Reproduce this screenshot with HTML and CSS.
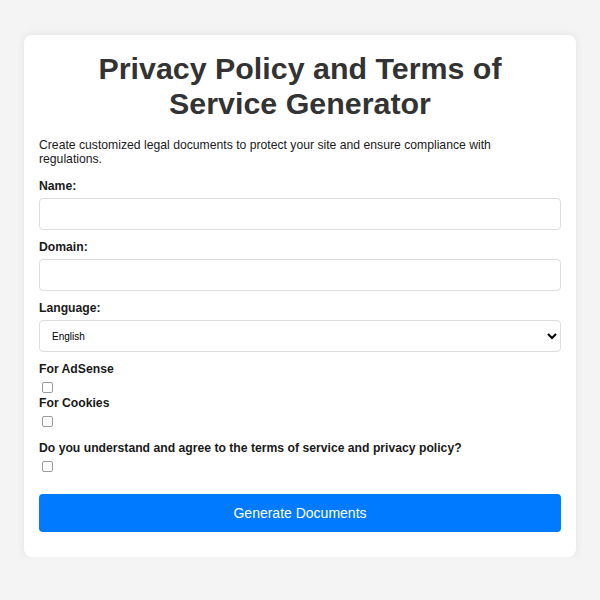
FILE: index.html
```html
<!DOCTYPE html>
<html lang="en">
<head>
<meta charset="utf-8">
<title>Privacy Policy and Terms of Service Generator</title>
<link rel="stylesheet" href="styles.css">
</head>
<body>
<div class="card">
  <h1 class="title">Privacy Policy and Terms of Service Generator</h1>
  <p class="intro">Create customized legal documents to protect your site and ensure compliance with regulations.</p>
  <form class="form">
    <label class="label" for="name">Name:</label>
    <input class="field" type="text" id="name">
    <label class="label" for="domain">Domain:</label>
    <input class="field" type="text" id="domain">
    <label class="label" for="lang">Language:</label>
    <select class="field select" id="lang">
      <option>English</option>
    </select>
    <label class="label" for="adsense">For AdSense</label>
    <input class="check" type="checkbox" id="adsense">
    <label class="label" for="cookies">For Cookies</label>
    <input class="check check-last" type="checkbox" id="cookies">
    <label class="label" for="agree">Do you understand and agree to the terms of service and privacy policy?</label>
    <input class="check check-agree" type="checkbox" id="agree">
    <button class="btn" type="button">Generate Documents</button>
  </form>
</div>
</body>
</html>
```
FILE: styles.css
```css
html, body {
  margin: 0;
  padding: 0;
}
body {
  background: #f4f4f4;
  font-family: "Liberation Sans", Arial, sans-serif;
  color: #1a1a1a;
  padding: 35px 24px 0;
}
.card {
  background: #fff;
  border-radius: 8px;
  box-shadow: 0 0 8px rgba(0, 0, 0, 0.08);
  padding: 16px 15px 25px;
}
.title {
  margin: 0 0 18px;
  padding: 0 20px;
  font-size: 30.4px;
  line-height: 34.5px;
  font-weight: bold;
  text-align: center;
  color: #333;
}
.intro {
  margin: 0 0 13px;
  padding-right: 20px;
  font-size: 12.2px;
  line-height: 14px;
}
.form {
  display: flex;
  flex-direction: column;
  align-items: flex-start;
}
.label {
  display: block;
  font-size: 12.2px;
  line-height: 14px;
  font-weight: bold;
  margin-bottom: 5px;
}
.field {
  box-sizing: border-box;
  width: 100%;
  height: 32px;
  border: 1px solid #ddd;
  border-radius: 4px;
  margin: 0 0 10px;
  padding: 0 8px;
  background: #fff;
  font-family: "Liberation Sans", Arial, sans-serif;
  font-size: 12px;
}
.select {
  font-size: 10px;
  color: #000;
}
.check {
  -webkit-appearance: none;
  appearance: none;
  box-sizing: border-box;
  width: 11px;
  height: 11px;
  border: 1px solid #9a9a9a;
  border-radius: 2px;
  background: #fff;
  margin: 1px 0 3px 3px;
}
.check-last {
  margin-bottom: 14px;
}
.check-agree {
  margin-bottom: 22px;
}
.btn {
  width: 100%;
  height: 38px;
  background: #007bff;
  color: #fff;
  border: none;
  border-radius: 4px;
  font-family: "Liberation Sans", Arial, sans-serif;
  font-size: 14px;
  cursor: pointer;
}
```
